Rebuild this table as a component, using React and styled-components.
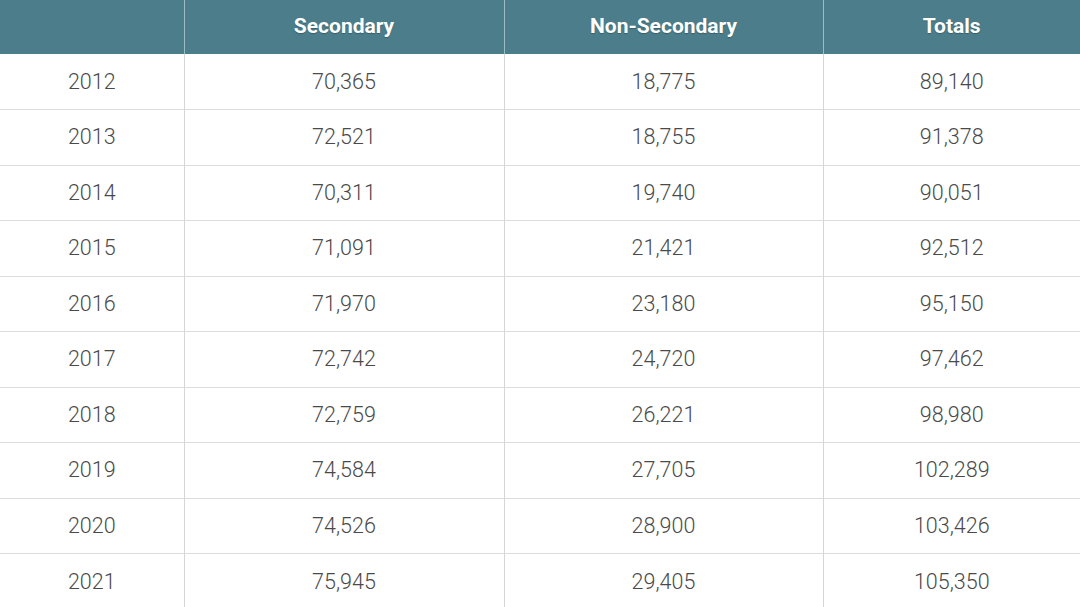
import React from 'react';
import styled, { createGlobalStyle } from 'styled-components';

const GlobalStyle = createGlobalStyle`
  body {
    margin: 0;
    background: #ffffff;
    font-family: Roboto, 'Noto Sans', sans-serif;
  }
`;

const Table = styled.table`
  width: 1080px;
  border-collapse: collapse;
  table-layout: fixed;
`;

const Col = styled.col`
  width: ${(p) => p.$w}px;
`;

const HeadCell = styled.th`
  height: 52px;
  padding: 0 0 2px;
  line-height: 1;
  background: #4b7d8b;
  color: #ffffff;
  font-size: 21px;
  font-weight: 700;
  text-align: center;
  text-shadow: 0 1px 1px rgba(0, 0, 0, 0.25);
  border-left: 1px solid #9bbcc4;

  &:first-child {
    border-left: none;
  }
`;

const Row = styled.tr`
  height: 55.5px;
  border-top: 1px solid #dcdcdc;

  &:first-child {
    border-top: none;
  }
`;

const Cell = styled.td`
  padding: 0 0 1px;
  text-align: center;
  font-size: 21.5px;
  font-weight: 300;
  color: #4a4a4a;
  border-left: 1px solid #d6d6d6;

  &:first-child {
    border-left: none;
  }
`;

const columns = [184, 320, 319, 257];

const rows = [
  ['2012', '70,365', '18,775', '89,140'],
  ['2013', '72,521', '18,755', '91,378'],
  ['2014', '70,311', '19,740', '90,051'],
  ['2015', '71,091', '21,421', '92,512'],
  ['2016', '71,970', '23,180', '95,150'],
  ['2017', '72,742', '24,720', '97,462'],
  ['2018', '72,759', '26,221', '98,980'],
  ['2019', '74,584', '27,705', '102,289'],
  ['2020', '74,526', '28,900', '103,426'],
  ['2021', '75,945', '29,405', '105,350'],
];

export default function App() {
  return (
    <>
      <GlobalStyle />
      <Table>
        <colgroup>
          {columns.map((w, i) => (
            <Col key={i} $w={w} />
          ))}
        </colgroup>
        <thead>
          <tr>
            <HeadCell />
            <HeadCell>Secondary</HeadCell>
            <HeadCell>Non-Secondary</HeadCell>
            <HeadCell>Totals</HeadCell>
          </tr>
        </thead>
        <tbody>
          {rows.map((r) => (
            <Row key={r[0]}>
              {r.map((v, i) => (
                <Cell key={i}>{v}</Cell>
              ))}
            </Row>
          ))}
        </tbody>
      </Table>
    </>
  );
}
